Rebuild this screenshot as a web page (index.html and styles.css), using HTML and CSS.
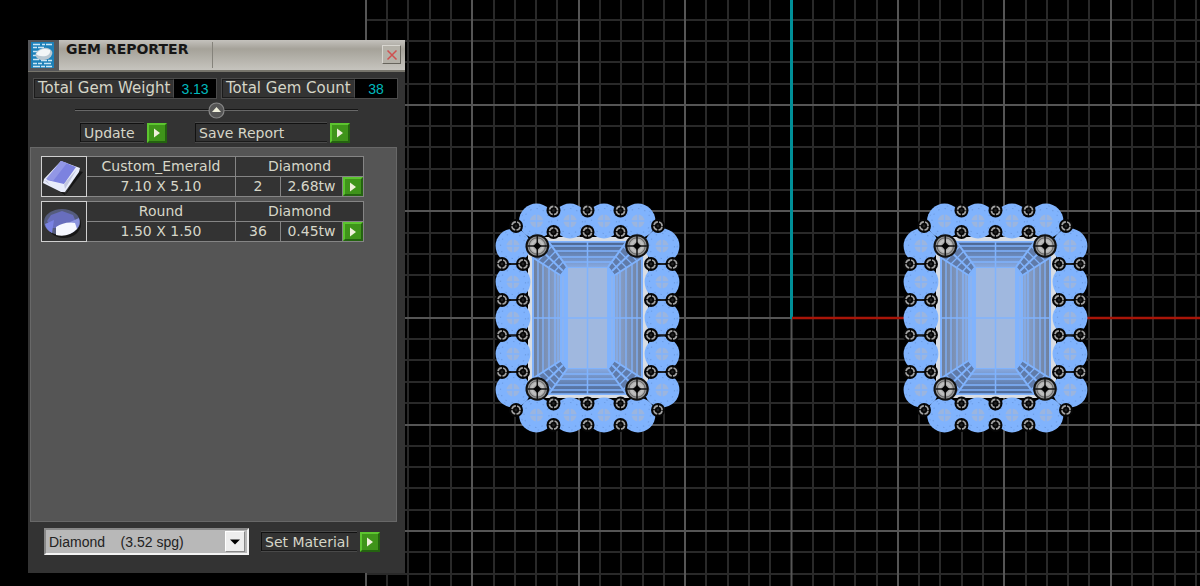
FILE: index.html
```html
<!DOCTYPE html>
<html lang="en">
<head>
<meta charset="utf-8">
<title>Gem Reporter</title>
<link rel="stylesheet" href="styles.css">
</head>
<body>
<svg class="viewport" aria-hidden="true">
  <defs>
    <radialGradient id="metal"><stop offset="0" stop-color="#777"/><stop offset=".55" stop-color="#c4c4c4"/><stop offset="1" stop-color="#8a8a8a"/></radialGradient>
    <linearGradient id="facetY" x1="0" y1="0" x2="0" y2="1"><stop offset="0" stop-color="#4a6591"/><stop offset="1" stop-color="#86a8df"/></linearGradient>
    <linearGradient id="facetYb" x1="0" y1="1" x2="0" y2="0"><stop offset="0" stop-color="#4a6591"/><stop offset="1" stop-color="#86a8df"/></linearGradient>
    <linearGradient id="facetX"><stop offset="0" stop-color="#6f819f"/><stop offset="1" stop-color="#8ba4cf"/></linearGradient>
    <linearGradient id="facetXr" x1="1" x2="0"><stop offset="0" stop-color="#6f819f"/><stop offset="1" stop-color="#8ba4cf"/></linearGradient>
    <g id="round">
      <circle r="17.4" fill="#80b3fd"/>
      <circle r="6.5" fill="#9bb5df"/>
      <path d="M0-7V7M-7 0H7" stroke="#80b3fd" stroke-width="1.4"/>
      <circle r="12.5" fill="none" stroke="#6f9fe6" stroke-width="1.2" stroke-dasharray="1.5 5"/>
      <circle r="15.2" fill="none" stroke="#6f9fe6" stroke-dasharray="1.5 9"/>
    </g>
    <g id="bead">
      <circle r="7" fill="#060606"/>
      <circle r="4.1" fill="none" stroke="#a2a2a2" stroke-width="1.6" stroke-dasharray="5.200 1.240" stroke-dashoffset="-.6"/>
      <circle r="1.4" fill="#222"/>
    </g>
    <g id="prong">
      <circle r="11.8" fill="#111"/>
      <circle r="9.8" fill="url(#metal)"/>
      <circle r="8.2" fill="none" stroke="#555" stroke-width=".8"/>
      <path d="M0-10V10M-10 0H10" stroke="#151515" stroke-width="1.5"/>
      <path d="M0-4L4 0L0 4L-4 0Z" fill="#050505"/>
    </g>
    <g id="pendant">
      <rect x="528" y="237" width="120" height="161" rx="6" fill="#d9dde3"/>
      <path d="M532 257L548 241H627L643 257V379L627 395H548L532 379Z" fill="#80b3fd"/>
      <path d="M548 242H627L608 267H567Z" fill="url(#facetY)"/>
      <path d="M548 394H627L608 369H567Z" fill="url(#facetYb)"/>
      <path d="M534 257L560 275V361L534 379Z" fill="url(#facetX)"/>
      <path d="M641 257L615 275V361L641 379Z" fill="url(#facetXr)"/>
      <g fill="#607ba9"><path d="M532 257L548 241L566 267L560 275ZM643 257L627 241L609 267L615 275ZM532 379L548 395L566 369L560 361ZM643 379L627 395L609 369L615 361Z"/></g>
      <g fill="none" stroke="#80b3fd" stroke-width="1.3">
        <path d="M533 257L548 242H627L642 257V379L627 394H548L533 379Z"/>
        <path d="M538 261L552 246H623L637 261V375L623 390H552L538 375Z"/>
        <path d="M543 264L556 251H619L632 264V372L619 385H556L543 372Z"/>
        <path d="M549 267L559 257H616L626 267V369L616 379H559L549 369Z"/>
        <path d="M555 271L563 262H612L620 271V365L612 374H563L555 365Z"/>
        <path d="M558 273V363M617 273V363" stroke-width="1"/>
        <path d="M532 257L560 275M548 241L567 267M540 249L563 271M643 257L615 275M627 241L608 267M635 249L612 271M532 379L560 361M548 395L567 369M540 387L563 365M643 379L615 361M627 395L608 369M635 387L612 365" stroke-width="2"/>
      </g>
      <path d="M560 275L567 267H608L615 275V361L608 369H567L560 361Z" fill="#80b3fd"/>
      <path d="M563 276V360M612 276V360" stroke="#94b3e7"/>
      <rect x="568" y="268" width="39" height="100" fill="#a0b8df"/>
      <path d="M587.500 242V394M532 318H643" stroke="#80b3fd" stroke-width="1.5"/>
      <use href="#round" x="536.500" y="221"/><use href="#round" x="570" y="221"/><use href="#round" x="604" y="221"/><use href="#round" x="638" y="221"/>
      <use href="#round" x="536.500" y="415"/><use href="#round" x="570" y="415"/><use href="#round" x="604" y="415"/><use href="#round" x="638" y="415"/>
      <use href="#round" x="513" y="246"/><use href="#round" x="513" y="282"/><use href="#round" x="513" y="318"/><use href="#round" x="513" y="354"/><use href="#round" x="513" y="390"/>
      <use href="#round" x="662" y="246"/><use href="#round" x="662" y="282"/><use href="#round" x="662" y="318"/><use href="#round" x="662" y="354"/><use href="#round" x="662" y="390"/>
      <path d="M502 264H523M502 300H523M502 335H523M502 372H523M651 264H672M651 300H672M651 335H672M651 372H672" stroke="#111" stroke-width="1.3"/>
      <use href="#bead" x="553.500" y="210.500"/><use href="#bead" x="587.500" y="210.500"/><use href="#bead" x="620.500" y="210.500"/>
      <use href="#bead" x="553.500" y="232"/><use href="#bead" x="587.500" y="232"/><use href="#bead" x="620.500" y="232"/>
      <use href="#bead" x="553.500" y="403.500"/><use href="#bead" x="587.500" y="403.500"/><use href="#bead" x="620.500" y="403.500"/>
      <use href="#bead" x="553.500" y="425"/><use href="#bead" x="587.500" y="425"/><use href="#bead" x="620.500" y="425"/>
      <use href="#bead" x="516" y="226"/><use href="#bead" x="658" y="226"/><use href="#bead" x="516" y="410"/><use href="#bead" x="658" y="410"/>
      <use href="#bead" x="502" y="264"/><use href="#bead" x="502" y="300"/><use href="#bead" x="502" y="335"/><use href="#bead" x="502" y="372"/>
      <use href="#bead" x="523" y="264"/><use href="#bead" x="523" y="300"/><use href="#bead" x="523" y="335"/><use href="#bead" x="523" y="372"/>
      <use href="#bead" x="651" y="264"/><use href="#bead" x="651" y="300"/><use href="#bead" x="651" y="335"/><use href="#bead" x="651" y="372"/>
      <use href="#bead" x="672.500" y="264"/><use href="#bead" x="672.500" y="300"/><use href="#bead" x="672.500" y="335"/><use href="#bead" x="672.500" y="372"/>
      <use href="#prong" x="537.300" y="246"/><use href="#prong" x="637" y="246"/><use href="#prong" x="537.300" y="389"/><use href="#prong" x="637" y="389"/>
    </g>
  </defs>
  <path class="grid-minor" d="M387 0v2000M408 0v2000M430 0v2000M451 0v2000M494 0v2000M515 0v2000M536 0v2000M557 0v2000M600 0v2000M621 0v2000M643 0v2000M664 0v2000M706 0v2000M728 0v2000M749 0v2000M770 0v2000M813 0v2000M834 0v2000M855 0v2000M877 0v2000M919 0v2000M940 0v2000M962 0v2000M983 0v2000M1026 0v2000M1047 0v2000M1068 0v2000M1089 0v2000M1132 0v2000M1153 0v2000M1175 0v2000M1196 0v2000"/>
  <path class="grid-minor" d="M365 20h3000M365 41h3000M365 62h3000M365 84h3000M365 126h3000M365 147h3000M365 169h3000M365 190h3000M365 233h3000M365 254h3000M365 275h3000M365 297h3000M365 339h3000M365 360h3000M365 382h3000M365 403h3000M365 446h3000M365 467h3000M365 488h3000M365 510h3000M365 552h3000M365 574h3000"/>
  <path class="grid-major" d="M366 0v2000M472 0v2000M579 0v2000M685 0v2000M791.500 0v2000M898 0v2000M1004 0v2000M1111 0v2000M365 105h3000M365 211h3000M365 318h3000M365 425h3000M365 531h3000"/>
  <path d="M791.500 0V319" stroke="#008f98" stroke-width="3"/>
  <path d="M792 318H3000" stroke="#a81508" stroke-width="2.500"/>
  <use href="#pendant"/>
  <use href="#pendant" x="408"/>
</svg>

<main class="stage">
  <section class="panel" aria-labelledby="title">
    <header class="titlebar">
      <svg class="logo" viewBox="0 0 31 31" aria-hidden="true">
        <rect width="31" height="31" fill="#56575a"/><rect x="3" y="2" width="23" height="26" fill="#1d80b8"/>
        <path d="M5 4.500h7M14 4.500h3M18 4.500h6M5 7.500h4M10 7.500h6M5 11.500h5M5 15.500h3M5 19.500h6M13 20.500h6M20 20.500h4M5 23.500h4M10 23.500h4M16 23.500h7M5 26.500h7M13 26.500h4M18 26.500h6" stroke="#c9e6f5" stroke-width="1.500"/>
        <ellipse cx="16" cy="14" rx="8.500" ry="6" transform="rotate(-14 16 14)" fill="#b9c8d2"/><path d="M8 14q5-7 14-4q1 4-4 6q-7 1-10-2Z" fill="#f2f6f7"/>
      </svg>
      <h1 class="title" id="title">GEM REPORTER</h1>
      <button class="close" aria-label="Close"><svg width="12" height="12" viewBox="0 0 12 12"><path d="M1.500 1.500L10.500 10.500M10.500 1.500L1.500 10.500" stroke="#cf5050" stroke-width="1.500"/></svg></button>
    </header>

    <div class="totals">
      <div class="total"><span class="total-label">Total Gem Weight</span><output class="total-value">3.13</output></div>
      <div class="total"><span class="total-label">Total Gem Count</span><output class="total-value">38</output></div>
    </div>

    <div class="collapse">
      <button class="knob" aria-label="Collapse"><svg width="17" height="17" viewBox="0 0 17 17"><circle cx="8.500" cy="8.500" r="7.500" fill="#555" stroke="#888" stroke-width="1.200"/><path d="M8.500 5L13 10H4Z" fill="#f0f0dc"/></svg></button>
    </div>

    <div class="actions">
      <div class="action"><label class="field update" for="update">Update</label><button class="go" id="update"><svg width="8" height="10" viewBox="0 0 8 10"><path d="M1 0.500L7 5L1 9.500Z"/></svg></button></div>
      <div class="action"><label class="field save" for="save">Save Report</label><button class="go" id="save"><svg width="8" height="10" viewBox="0 0 8 10"><path d="M1 0.500L7 5L1 9.500Z"/></svg></button></div>
    </div>

    <div class="list">
      <table class="gem">
        <colgroup><col class="c-pic"><col class="c-size"><col class="c-qty"><col class="c-wt"><col class="c-go"></colgroup>
        <tr><td class="pic" rowspan="2"><svg width="43" height="39" viewBox="0 0 43 39" aria-hidden="true"><path d="M8 29L24 37L41 15L37 14L23 38Z" fill="#151515"/><path d="M19 4L38 11L37 15L23 35L19 35L1 26L2 22Z" fill="#e8ecfb"/><path d="M19 4L34 10L22 27L5 23Z" fill="#7c82df"/><path d="M19 4L25 6L11 24L4 22Z" fill="#9297e5"/><path d="M2 23L8 28L5 24ZM22 27L35 12L23 32Z" fill="#c2c7df"/></svg></td><td>Custom_Emerald</td><td colspan="3">Diamond</td></tr>
        <tr><td>7.10 X 5.10</td><td>2</td><td>2.68tw</td><td class="go-cell"><button class="go" aria-label="Open Custom_Emerald"><svg width="8" height="10" viewBox="0 0 8 10"><path d="M1 0.500L7 5L1 9.500Z"/></svg></button></td></tr>
      </table>
      <table class="gem">
        <colgroup><col class="c-pic"><col class="c-size"><col class="c-qty"><col class="c-wt"><col class="c-go"></colgroup>
        <tr><td class="pic" rowspan="2"><svg width="43" height="39" viewBox="0 0 43 39" aria-hidden="true"><ellipse cx="22" cy="22" rx="17" ry="14" fill="#171717"/><ellipse cx="20" cy="20" rx="18" ry="13" fill="#555c7d"/><path d="M9 13L20 9L31 13L34 20L24 26H10L5 19Z" fill="#686ebd"/><path d="M3 22L12 18L10 31Q4 28 3 22Z" fill="#7a83e4"/><path d="M28 20L37 16Q39 22 35 27Z" fill="#8b94de"/><path d="M14 25Q23 19 33 21L35 27Q26 36 14 33Z" fill="#f5f7ff"/></svg></td><td>Round</td><td colspan="3">Diamond</td></tr>
        <tr><td>1.50 X 1.50</td><td>36</td><td>0.45tw</td><td class="go-cell"><button class="go" aria-label="Open Round"><svg width="8" height="10" viewBox="0 0 8 10"><path d="M1 0.500L7 5L1 9.500Z"/></svg></button></td></tr>
      </table>
    </div>

    <footer class="footer">
      <div class="picker">
        <select class="material" aria-label="Material"><option>Diamond&nbsp;&nbsp;&nbsp;&nbsp;(3.52 spg)</option></select>
        <span class="arrow"><svg width="10" height="6" viewBox="0 0 10 6"><path d="M0 0.500H10L5 5.500Z"/></svg></span>
      </div>
      <div class="action"><label class="field set" for="set">Set Material</label><button class="go" id="set"><svg width="8" height="10" viewBox="0 0 8 10"><path d="M1 0.500L7 5L1 9.500Z"/></svg></button></div>
    </footer>
  </section>
</main>
</body>
</html>
```
FILE: styles.css
```css
* { box-sizing: border-box; }
body {
  margin: 0;
  background: #000;
  color: #d6d6c8;
  font: 14px/18px "DejaVu Sans", Verdana, sans-serif;
}
button { padding: 0; font: inherit; display: grid; place-items: center; }
.viewport { position: fixed; inset: 0; width: 100%; height: 100%; }
.grid-minor { stroke: #292929; stroke-width: 2; }
.grid-major { stroke: #555; stroke-width: 2; }
.stage {
  position: relative;
  display: flex;
  min-height: 100vh;
  padding: 40px 0 13px 28px;
}
.panel {
  display: flex;
  flex-direction: column;
  width: 377px;
  background: #333;
}
.titlebar {
  display: flex;
  height: 32px;
  background: linear-gradient(#c4c2bd, #a5a299 30%, #c6c4be);
  border-bottom: 2px solid #77756c;
  color: #161616;
}
.logo { width: 31px; height: 31px; }
.title {
  width: 154px;
  margin: 2px 0;
  padding-left: 7px;
  border-right: 1px solid #85837b;
  font-size: 14px;
  line-height: 14px;
}
.close {
  width: 19px;
  height: 19px;
  margin: 5px 4px 0 auto;
  background: #b4b1a8;
  border: 1px solid;
  border-color: #d8d6d0 #66645c #66645c #d8d6d0;
}
.totals {
  display: grid;
  grid-template-columns: 184px 1fr;
  gap: 4px;
  padding: 6px 7px 0 5px;
}
.total { display: flex; height: 21px; border: 1px solid #4b4b4b; }
.total-label {
  flex: 1;
  padding-left: 3px;
  border: 1px solid #1b1b1b;
  border-right-color: #4b4b4b;
  font-size: 15px;
  line-height: 17px;
  white-space: nowrap;
}
.total-value {
  width: 42px;
  background: #000;
  color: #00b9bd;
  font: 14px/20px "Liberation Sans", Arial, sans-serif;
  text-align: center;
}
.collapse {
  display: grid;
  place-items: center;
  height: 18px;
  margin: 2px 47px 0;
  background: linear-gradient(#161616, #161616) 0 8px / 100% 1px no-repeat, linear-gradient(#686868, #686868) 0 9px / 100% 1px no-repeat;
}
.knob { border: 0; background: none; }
.actions { display: flex; gap: 28px; padding: 3px 0 0 52px; }
.action { display: flex; align-items: center; gap: 3px; }
.field {
  height: 21px;
  padding-left: 4px;
  border: solid #494949;
  border-width: 1px 0;
  box-shadow: inset 1px 1px #111, inset 0 -1px #1b1b1b;
  line-height: 21px;
  white-space: nowrap;
}
.update { width: 64px; }
.save { width: 132px; }
.set { width: 96px; }
.go {
  width: 20px;
  height: 20px;
  border: 2px solid;
  border-color: #5cc52f #246310 #246310 #5cc52f;
  background: #3f941a;
}
.go svg { fill: #f0f0dc; }
.list {
  flex: 1;
  margin: 4px 8px 0 2px;
  padding: 8px 10px;
  background: #555;
  border: 1px solid #686868;
}
.gem {
  table-layout: fixed;
  width: 322px;
  margin-bottom: 4px;
  border-collapse: collapse;
  background: #333;
  line-height: 17px;
  text-align: center;
}
.gem td { height: 20px; padding: 1px 0; border: 1px solid #858585; }
.gem .pic { padding: 0; border-color: #d0d0d0; }
.gem .go-cell { padding: 0; }
.go-cell .go { height: 19px; }
.pic svg { display: block; }
.c-pic { width: 45px; }
.c-size { width: 149px; }
.c-qty { width: 45px; }
.c-wt { width: 62px; }
.c-go { width: 21px; }
.footer { display: flex; align-items: center; gap: 12px; padding: 6px 16px 18px; }
.picker { position: relative; width: 205px; }
.material {
  display: block;
  width: 100%;
  height: 27px;
  padding: 0 3px;
  appearance: none;
  background: #b8b8b8;
  border: 2px solid;
  border-color: #888 #f4f4f4 #f4f4f4 #888;
  border-radius: 0;
  color: #222;
  font: 14px/20px "Liberation Sans", Arial, sans-serif;
}
.arrow {
  position: absolute;
  inset: 3px 4px 3px auto;
  display: grid;
  place-items: center;
  width: 20px;
  background: #eee;
  border: 1px solid;
  border-color: #fff #888 #888 #fff;
  pointer-events: none;
}
```
